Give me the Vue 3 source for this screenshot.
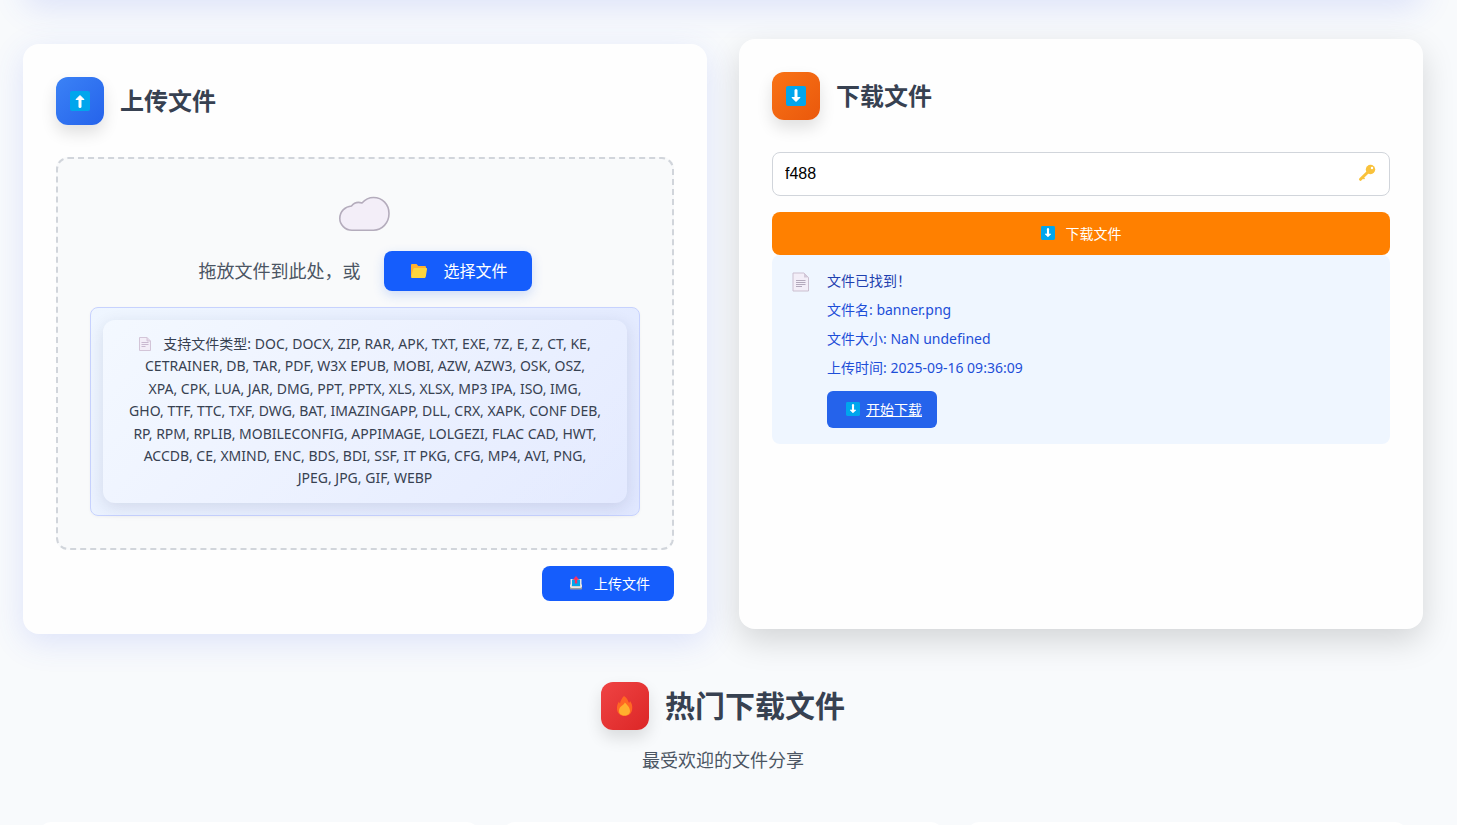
<script setup>
import { ref } from 'vue'

const code = ref('f488')

const typeLines = [
  'DOC, DOCX, ZIP, RAR, APK, TXT, EXE, 7Z, E, Z, CT, KE,',
  'CETRAINER, DB, TAR, PDF, W3X EPUB, MOBI, AZW, AZW3, OSK, OSZ,',
  'XPA, CPK, LUA, JAR, DMG, PPT, PPTX, XLS, XLSX, MP3 IPA, ISO, IMG,',
  'GHO, TTF, TTC, TXF, DWG, BAT, IMAZINGAPP, DLL, CRX, XAPK, CONF DEB,',
  'RP, RPM, RPLIB, MOBILECONFIG, APPIMAGE, LOLGEZI, FLAC CAD, HWT,',
  'ACCDB, CE, XMIND, ENC, BDS, BDI, SSF, IT PKG, CFG, MP4, AVI, PNG,',
  'JPEG, JPG, GIF, WEBP'
]

const found = [
  '文件名: banner.png',
  '文件大小: NaN undefined',
  '上传时间: 2025-09-16 09:36:09'
]
</script>

<template>
  <div class="page">
    <div class="container">
      <div class="hero"></div>

      <main class="columns">
        <section class="card upload">
          <header class="card-head">
            <span class="badge blue">
              <svg width="20" height="20" viewBox="0 0 20 20">
                <rect width="20" height="20" rx="2" fill="#00a6ed" />
                <path d="M10 4.500 14 8.500H6Z" fill="#fff" stroke="#fff" stroke-linejoin="round" />
                <path d="M10 15.500V7" stroke="#fff" stroke-width="3" stroke-linecap="round" />
              </svg>
            </span>
            <h2>上传文件</h2>
          </header>

          <div class="dropzone">
            <svg class="cloud" width="54" height="38" viewBox="0 0 54 38">
              <path d="M14 35.200C7 35.200 1.800 29.500 1.800 23.500C1.800 16 7.500 11.500 13.500 11C16 7.800 20 6.700 24 8C27 4.600 30.500 2.500 35.500 2.500C44.500 2.500 51 9.500 51 18.500C51 28 44 35.200 35.500 35.200Z" fill="#f3eef8" stroke="#b4acbc" stroke-width="1.600" stroke-linejoin="round" />
            </svg>
            <div class="pick">
              <span class="hint">拖放文件到此处，或</span>
              <button type="button" class="btn choose">
                <svg width="18" height="18" viewBox="0 0 18 18">
                  <path d="M1 4.200C1 3.500 1.500 3 2.200 3H6.500L8.300 5H14.800C15.500 5 16 5.500 16 6.200V15H1Z" fill="#ffb02e" />
                  <path d="M4.800 7H16C16.800 7 17.200 7.500 17 8.300L15.800 15.500C15.700 16.400 15.200 17 14.300 17H2.200C1.300 17 .9 16.400 1.100 15.500L3.200 8.300C3.400 7.500 4 7 4.800 7Z" fill="#fcd53f" />
                </svg>
                选择文件
              </button>
            </div>
            <div class="types">
              <p class="types-inner">
                <svg class="page-icon" width="12" height="14" viewBox="0 0 12 14">
                  <path d="M.5.5H8L11.500 4V13.500H.5Z" fill="#f3eef8" stroke="#d3c5d8" />
                  <path d="M8 .5V4H11.500" fill="#e3d7e8" stroke="#d3c5d8" />
                  <path d="M2.500 5.500H9.500M2.500 7.500H9.500M2.500 9.500H6.500" stroke="#c9b9d0" />
                </svg>支持文件类型: <template v-for="(line, i) in typeLines" :key="i">{{ line }}<br v-if="i < typeLines.length - 1" /></template>
              </p>
            </div>
          </div>

          <div class="actions">
            <button type="button" class="btn send">
              <svg width="14" height="14" viewBox="0 0 14 14">
                <path d="M1.500 3H12.500V12H1.500Z" fill="#e6e6e6" />
                <path d="M3 3.500H11V10H3Z" fill="#00a6ed" />
                <path d="M1 8.500 3.500 10.500H10.500L13 8.500V12.500C13 13.200 12.600 13.500 12 13.500H2C1.400 13.500 1 13.200 1 12.500Z" fill="#9b9b9b" />
                <path d="M1 8 3.500 10.500H10.500L13 8V11L11.500 12H2.500L1 11Z" fill="#e6e6e6" />
                <path d="M7 0 10.200 3.800H8.200V7.500H5.800V3.800H3.800Z" fill="#f92f60" />
              </svg>
              上传文件
            </button>
          </div>
        </section>

        <section class="card download">
          <header class="card-head">
            <span class="badge orange">
              <svg width="20" height="20" viewBox="0 0 20 20">
                <rect width="20" height="20" rx="2" fill="#00a6ed" />
                <path d="M10 15.500 14 11.500H6Z" fill="#fff" stroke="#fff" stroke-linejoin="round" />
                <path d="M10 4.500V13" stroke="#fff" stroke-width="3" stroke-linecap="round" />
              </svg>
            </span>
            <h2>下载文件</h2>
          </header>

          <div class="field">
            <input v-model="code" type="text" aria-label="提取码" />
            <svg class="key" width="18" height="18" viewBox="0 0 18 18">
              <path d="M10.500 7.500 2.500 15.300" stroke="#f9c23c" stroke-width="3" stroke-linecap="round" />
              <path d="M5 13.500 6.500 15" stroke="#f9c23c" stroke-width="1.500" />
              <circle cx="12.500" cy="5.500" r="4.700" fill="#f9c23c" />
              <circle cx="14" cy="4" r="1.200" fill="#fff" />
            </svg>
          </div>

          <button type="button" class="btn fetch">
            <svg width="14" height="14" viewBox="0 0 20 20">
              <rect width="20" height="20" rx="2" fill="#00a6ed" />
              <path d="M10 15.500 14 11.500H6Z" fill="#fff" stroke="#fff" stroke-linejoin="round" />
              <path d="M10 4.500V13" stroke="#fff" stroke-width="3" stroke-linecap="round" />
            </svg>
            下载文件
          </button>

          <div class="result">
            <svg class="doc" width="18" height="20" viewBox="0 0 18 20">
              <path d="M1 1H12L16.500 5.500V19H1Z" fill="#f3eef8" stroke="#cbbfd0" stroke-linejoin="round" />
              <path d="M12 1V5.500H16.500Z" fill="#d3c9d9" />
              <path d="M4 8.500H13.500M4 10.500H13.500M4 12.500H13.500M4 14.500H10" stroke="#b3a9bc" />
            </svg>
            <div class="result-body">
              <p class="ok">文件已找到！</p>
              <p v-for="row in found" :key="row">{{ row }}</p>
              <a href="#" class="start">
                <svg width="14" height="14" viewBox="0 0 20 20">
                  <rect width="20" height="20" rx="2" fill="#00a6ed" />
                  <path d="M10 15.500 14 11.500H6Z" fill="#fff" stroke="#fff" stroke-linejoin="round" />
                  <path d="M10 4.500V13" stroke="#fff" stroke-width="3" stroke-linecap="round" />
                </svg>
                <span>开始下载</span>
              </a>
            </div>
          </div>
        </section>
      </main>

      <section class="hot">
        <div class="hot-head">
          <span class="badge red">
            <svg width="20" height="24" viewBox="0 0 20 24">
              <path d="M9 2C12 4 13 6.500 14 9C14.600 8.500 15 7.700 15 7C17 9.500 17.500 12 17.200 15C16.800 19.500 13.500 22 9.500 22C5.500 22 2.500 19.500 2 15.500C1.700 12.500 2.500 9.500 4 7.500C4.200 8.500 4.500 9 5 9.500C5.500 6.500 7 4 9 2Z" fill="#ff6723" />
              <path d="M9.800 8.500C12 10.500 15 13.500 15 17C15 20 12.500 21.500 9.500 21.500C6.500 21.500 4 20 4 17C4 14.500 5.200 13 6.800 11.800C8.300 10.800 9.300 10 9.800 8.500Z" fill="#ffb02e" />
            </svg>
          </span>
          <h1>热门下载文件</h1>
        </div>
        <p>最受欢迎的文件分享</p>
      </section>

      <div class="tiles">
        <div v-for="n in 3" :key="n" class="tile"></div>
      </div>
    </div>
  </div>
</template>

<style>
body {
  margin: 0;
  background: #f8fafc;
}
</style>

<style scoped>
* {
  box-sizing: border-box;
}

.page {
  height: 100vh;
  overflow: hidden;
  background: #f8fafc;
  color: #374151;
  font-family: "Noto Sans", "Noto Sans CJK SC", sans-serif;
  font-size: 14px;
}

.container {
  padding: 0 34px 0 23px;
}

h1, h2, p {
  margin: 0;
}

svg {
  flex: none;
}

.hero {
  height: 40px;
  margin-top: -40px;
  border-radius: 16px;
  background: #fff;
  box-shadow: 0 8px 32px rgba(67, 97, 238, 0.15);
}

.columns {
  display: grid;
  grid-template-columns: 1fr 1fr;
  gap: 32px;
  margin-top: 44px;
}

.card {
  padding: 33px;
  border-radius: 16px;
  background: #fefefe;
}

.upload {
  box-shadow: 0 8px 32px rgba(67, 97, 238, 0.15);
}

.download {
  transform: translateY(-5px);
  box-shadow: 0 12px 32px rgba(0, 0, 0, 0.15);
}

.card-head {
  display: flex;
  align-items: center;
  gap: 16px;
  margin-bottom: 32px;
}

.badge {
  display: flex;
  align-items: center;
  justify-content: center;
  width: 48px;
  height: 48px;
  border-radius: 12px;
  box-shadow: 0 8px 16px rgba(0, 0, 0, 0.12);
}

.blue {
  background: linear-gradient(135deg, #3b82f6, #2563eb);
}

.orange {
  background: linear-gradient(135deg, #f97316, #ea580c);
}

.red {
  background: linear-gradient(135deg, #ef4444, #dc2626);
}

h2 {
  font-size: 24px;
  line-height: 32px;
  font-weight: 700;
}

.dropzone {
  display: flex;
  flex-direction: column;
  align-items: center;
  padding: 32px;
  border: 2px dashed #d1d5db;
  border-radius: 12px;
  background: #f9fafb;
}

.cloud {
  margin: 4px 0 18px;
}

.pick {
  display: flex;
  align-items: center;
  gap: 24px;
  margin-bottom: 16px;
}

.hint {
  color: #4b5563;
  font-size: 18px;
  line-height: 28px;
}

.btn {
  display: flex;
  align-items: center;
  justify-content: center;
  border: 0;
  border-radius: 8px;
  color: #fff;
  background: #155dfc;
  font-family: inherit;
  font-size: 14px;
}

.choose {
  gap: 15px;
  height: 40px;
  padding: 0 24px 2px 26px;
  font-size: 16px;
  box-shadow: 0 4px 12px rgba(37, 99, 235, 0.2);
}

.types {
  align-self: stretch;
  padding: 12px;
  border: 1px solid #c7d2fe;
  border-radius: 8px;
  background: linear-gradient(135deg, #eff6ff, #e0e7ff);
  box-shadow: 0 1px 3px rgba(0, 0, 0, 0.04);
}

.types-inner {
  padding: 13px;
  border-radius: 12px;
  background: linear-gradient(135deg, rgba(255, 255, 255, 0.3), rgba(255, 255, 255, 0.1));
  box-shadow: 0 4px 16px rgba(31, 38, 80, 0.12);
  line-height: 1.6;
  text-align: center;
  white-space: nowrap;
}

.page-icon {
  margin-right: 12px;
  vertical-align: -2px;
}

.actions {
  display: flex;
  justify-content: flex-end;
  margin-top: 16px;
}

.send {
  gap: 11px;
  height: 35px;
  padding: 0 24px 0 27px;
}

.field {
  position: relative;
}

.field input {
  display: block;
  width: 100%;
  height: 44px;
  padding: 0 44px 0 12px;
  border: 1px solid #d1d5db;
  border-radius: 8px;
  outline: 0;
  background: #fff;
  color: #000;
  font-family: "Liberation Sans", sans-serif;
  font-size: 16px;
}

.key {
  position: absolute;
  top: 12px;
  right: 14px;
}

.fetch {
  gap: 11px;
  width: 100%;
  height: 43px;
  margin-top: 16px;
  padding: 0 0 2px;
  background: #ff8000;
}

.result {
  display: flex;
  gap: 17px;
  padding: 15px 20px 16px;
  border-radius: 8px;
  background: #eff6ff;
  color: #1d4ed8;
}

.doc {
  margin-top: 2px;
}

.result-body {
  display: flex;
  flex-direction: column;
  align-items: flex-start;
  gap: 8px;
}

.result p {
  line-height: 21px;
}

.result .ok {
  color: #1e40af;
}

.start {
  display: flex;
  align-items: center;
  gap: 6px;
  height: 37px;
  margin-top: 5px;
  padding: 0 15px 2px 19px;
  border-radius: 6px;
  background: #2563eb;
  color: #fff;
  text-decoration: none;
}

.start span {
  text-decoration: underline;
}

.hot {
  display: flex;
  flex-direction: column;
  align-items: center;
  gap: 16px;
  margin-top: 48px;
}

.hot-head {
  display: flex;
  align-items: center;
  gap: 16px;
}

h1 {
  font-size: 30px;
  line-height: 36px;
}

.hot p {
  color: #4b5563;
  font-size: 18px;
  line-height: 28px;
}

.tiles {
  display: grid;
  grid-template-columns: 1fr 1fr 1fr;
  gap: 24px;
  margin-top: 48px;
  padding: 0 16px;
}

.tile {
  height: 120px;
  border-radius: 12px;
  background: #fff;
}
</style>
